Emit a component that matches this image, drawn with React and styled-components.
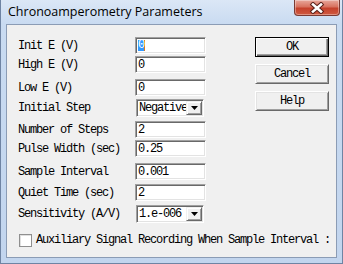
import React from "react";
import styled, { createGlobalStyle } from "styled-components";

const GlobalStyle = createGlobalStyle`
  html, body {
    margin: 0;
    padding: 0;
    background: #ffffff;
  }
`;

const mono = `"Liberation Mono", "DejaVu Sans Mono", monospace`;

const Window = styled.div`
  width: 343px;
  height: 264px;
  box-sizing: border-box;
  border: 1px solid #6f84a3;
  border-top: none;
  background: linear-gradient(to bottom, #dbe7f6 0px, #c9dbf1 24px, #c2d5ee 100%);
  display: flex;
  flex-direction: column;
  padding: 0 5px 5px 5px;
`;

const TitleBar = styled.div`
  height: 24px;
  display: flex;
  align-items: center;
  margin-right: -3px;
`;

const Title = styled.span`
  font-family: "Open Sans", "Noto Sans", sans-serif;
  font-size: 12.5px;
  color: #000;
  padding-left: 2px;
  margin-top: -1px;
  flex: 1;
`;

const CloseButton = styled.div`
  align-self: flex-start;
  width: 46px;
  height: 16px;
  box-sizing: border-box;
  border: 1px solid #7a3a33;
  border-top: none;
  border-radius: 0 0 4px 4px;
  background: linear-gradient(to bottom, #e8a89c 0%, #d8725f 45%, #c5412c 55%, #cf5a40 100%);
  box-shadow: inset 0 0 0 1px rgba(255, 255, 255, 0.35);
  display: flex;
  align-items: center;
  justify-content: center;
`;

const Client = styled.div`
  flex: 1;
  border: 1px solid #8b9cb5;
  background: #f0f0f0;
  display: flex;
  flex-direction: column;
  padding: 12px 0 0 11px;
  font-family: ${mono};
  font-size: 12px;
  letter-spacing: -1.2px;
  color: #000;
`;

const Top = styled.div`
  display: flex;
`;

const Form = styled.div`
  display: flex;
  flex-direction: column;
`;

const Row = styled.div`
  display: flex;
  align-items: center;
  margin-top: ${(p) => p.$gap || 0}px;
`;

const Label = styled.span`
  width: 117px;
  white-space: pre;
`;

const Field = styled.div`
  width: 71px;
  height: 17px;
  box-sizing: border-box;
  background: #fff;
  border: 1px solid;
  border-color: #a0a0a0 #ffffff #ffffff #a0a0a0;
  box-shadow: inset 1px 1px 0 #696969, inset -1px -1px 0 #e3e3e3;
  display: flex;
  align-items: center;
  padding-left: 2px;
  white-space: pre;
`;

const Selected = styled.span`
  background: #3399ff;
  color: #fff;
  border-right: 1px solid #d9791f;
  line-height: 11px;
`;

const Select = styled.div`
  width: 68px;
  height: 18px;
  margin-left: 1px;
  box-sizing: border-box;
  background: #fff;
  border: 1px solid;
  border-color: #a0a0a0 #ffffff #ffffff #a0a0a0;
  box-shadow: inset 1px 1px 0 #696969, inset -1px -1px 0 #e3e3e3;
  display: flex;
  align-items: center;
  padding: 1px 1px 1px 2px;
  white-space: pre;
`;

const SelectText = styled.span`
  flex: 1;
  overflow: hidden;
`;

const ArrowButton = styled.div`
  width: 16px;
  height: 14px;
  box-sizing: border-box;
  background: #f0f0f0;
  border: 1px solid;
  border-color: #f0f0f0 #696969 #696969 #f0f0f0;
  box-shadow: inset 1px 1px 0 #ffffff, inset -1px -1px 0 #a0a0a0;
  display: flex;
  align-items: center;
  justify-content: center;
`;

const Buttons = styled.div`
  display: flex;
  flex-direction: column;
  gap: 7px;
  margin-left: 49px;
`;

const Button = styled.div`
  width: 74px;
  height: 20px;
  box-sizing: border-box;
  background: #f0f0f0;
  border: 1px solid;
  border-color: ${(p) => (p.$default ? "#000" : "#ffffff #696969 #696969 #ffffff")};
  box-shadow: ${(p) =>
    p.$default
      ? "inset 1px 1px 0 #ffffff, inset -1px -1px 0 #696969, inset -2px -2px 0 #a0a0a0"
      : "inset 1px 1px 0 #e3e3e3, inset -1px -1px 0 #a0a0a0"};
  display: flex;
  align-items: center;
  justify-content: center;
`;

const CheckRow = styled.div`
  display: flex;
  align-items: center;
  margin-top: 10px;
  padding-left: 1px;
  white-space: pre;
`;

const CheckBox = styled.div`
  width: 13px;
  height: 13px;
  flex: none;
  box-sizing: border-box;
  background: #fff;
  border: 1px solid #8f8f8f;
  box-shadow: inset 1px 1px 0 #e0e0e0;
  margin-right: 4px;
`;

const Arrow = () => (
  <svg width="7" height="4" viewBox="0 0 7 4">
    <path d="M0 0 H7 L3.5 4 Z" fill="#000" />
  </svg>
);

const CloseX = () => (
  <svg width="16" height="12" viewBox="0 0 16 12">
    <path d="M4 2.5 L12 9.5 M12 2.5 L4 9.5" stroke="#5b211a" strokeWidth="4.6" strokeLinecap="square" />
    <path d="M4 2.5 L12 9.5 M12 2.5 L4 9.5" stroke="#ffffff" strokeWidth="2.6" strokeLinecap="square" />
  </svg>
);

const fields = [
  { label: "Init E (V)", value: "0", gap: 0, selected: true },
  { label: "High E (V)", value: "0", gap: 2 },
  { label: "Low E (V)", value: "0", gap: 6 },
  { label: "Initial Step", value: "Negative", gap: 3, select: true },
  { label: "Number of Steps", value: "2", gap: 4 },
  { label: "Pulse Width (sec)", value: "0.25", gap: 2 },
  { label: "Sample Interval", value: "0.001", gap: 6 },
  { label: "Quiet Time (sec)", value: "2", gap: 4 },
  { label: "Sensitivity (A/V)", value: "1.e-006", gap: 4, select: true },
];

export default function App() {
  return (
    <>
      <GlobalStyle />
      <Window>
        <TitleBar>
          <Title>Chronoamperometry Parameters</Title>
          <CloseButton>
            <CloseX />
          </CloseButton>
        </TitleBar>
        <Client>
          <Top>
            <Form>
              {fields.map((f) => (
                <Row key={f.label} $gap={f.gap}>
                  <Label>{f.label}</Label>
                  {f.select ? (
                    <Select>
                      <SelectText>{f.value}</SelectText>
                      <ArrowButton>
                        <Arrow />
                      </ArrowButton>
                    </Select>
                  ) : (
                    <Field>{f.selected ? <Selected>{f.value}</Selected> : f.value}</Field>
                  )}
                </Row>
              ))}
            </Form>
            <Buttons>
              <Button $default>OK</Button>
              <Button>Cancel</Button>
              <Button>Help</Button>
            </Buttons>
          </Top>
          <CheckRow>
            <CheckBox />
            Auxiliary Signal Recording When Sample Interval :
          </CheckRow>
        </Client>
      </Window>
    </>
  );
}
